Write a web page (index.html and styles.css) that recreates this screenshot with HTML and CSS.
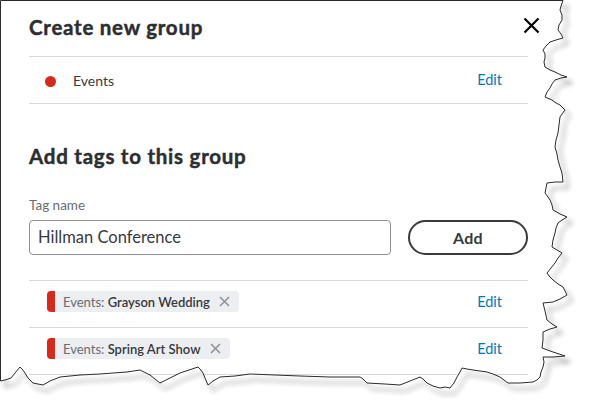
FILE: index.html
```html
<!DOCTYPE html>
<html lang="en">
<head>
<meta charset="utf-8">
<title>Create new group</title>
<link rel="stylesheet" href="styles.css">
</head>
<body>
<div class="modal">
  <div class="header">
    <h1 class="title">Create new group</h1>
    <button class="close" aria-label="Close">
      <svg width="17" height="17" viewBox="0 0 17 17"><path d="M1.5 1.5L15.5 15.5M15.5 1.5L1.5 15.5" stroke="#000" stroke-width="2.2" fill="none"/></svg>
    </button>
  </div>
  <div class="row group-row">
    <div class="group-name"><span class="dot"></span><span>Events</span></div>
    <a class="edit">Edit</a>
  </div>

  <h2 class="title section-title">Add tags to this group</h2>
  <div class="field">
    <label class="label">Tag name</label>
    <div class="input-row">
      <div class="input">Hillman Conference</div>
      <button class="add">Add</button>
    </div>
  </div>

  <div class="row tag-row">
    <span class="pill"><span class="pre">Events:</span>&nbsp;<span class="name">Grayson Wedding</span>
      <svg class="x" width="11" height="11" viewBox="0 0 11 11"><path d="M1 1L10 10M10 1L1 10" stroke="#8d9096" stroke-width="1.5"/></svg></span>
    <a class="edit">Edit</a>
  </div>
  <div class="row tag-row">
    <span class="pill"><span class="pre">Events:</span>&nbsp;<span class="name">Spring Art Show</span>
      <svg class="x" width="11" height="11" viewBox="0 0 11 11"><path d="M1 1L10 10M10 1L1 10" stroke="#8d9096" stroke-width="1.5"/></svg></span>
    <a class="edit">Edit</a>
  </div>
</div>

<svg class="torn" width="589" height="412" viewBox="0 0 589 412">
  <defs>
    <filter id="blur" x="-10%" y="-10%" width="130%" height="130%"><feGaussianBlur stdDeviation="2.6"/></filter>
    <clipPath id="outside">
      <path clip-rule="evenodd" d="M0 0H589V412H0Z M0.5 0.5 L563 0.5 L561 6 L560 10 L562 15 L562 20 L559 25 L558 30 L561 34 L563 38 L556 40 L550 42 L546 46 L543 50 L545 54 L545 58 L544 62 L545 67 L550 70 L555 72 L561 75 L567 77 L561 78 L555 80 L552 84 L550 88 L547 92 L545 97 L552 100 L556 103 L560 105 L563 108 L565 110 L562 114 L560 117 L559 125 L558 133 L556 140 L555 147 L557 154 L558 160 L560 167 L562 173 L563 182 L555 182 L547 183 L546 188 L545 193 L548 197 L550 200 L552 205 L553 210 L560 214 L567 217 L562 220 L558 223 L556 228 L555 233 L553 240 L552 247 L557 250 L562 253 L558 258 L555 263 L551 268 L547 273 L550 277 L553 280 L558 284 L563 287 L565 291 L567 295 L560 299 L553 302 L543 303 L545 311 L547 320 L552 324 L557 327 L550 329 L543 332 L543 340 L542 348 L553 352 L565 356 L553 357 L543 357 L544 362 L543 367 L541 372 L540 377 L537 380 L533 382 L520 383 L508 383 L504 380 L500 377 L493 374 L487 372 L480 371 L473 370 L467 369 L462 368 L460 372 L457 377 L454 383 L450 388 L445 387 L440 388 L433 386 L427 383 L423 379 L420 377 L410 381 L400 385 L385 384 L367 383 L363 379 L360 377 L330 377 L300 376 L275 375 L250 374 L235 376 L220 377 L213 381 L208 385 L205 378 L203 373 L200 369 L198 367 L189 370 L180 373 L170 378 L160 383 L150 375 L140 370 L127 372 L113 373 L100 374 L80 375 L60 377 L50 381 L43 385 L33 383 L28 378 L25 373 L22 369 L20 367 L15 373 L11 378 L5 380 L0.5 381 Z"/>
    </clipPath>
  </defs>
  <g clip-path="url(#outside)">
    <rect width="589" height="412" fill="#fff"/>
    <use href="#edge" transform="translate(5 6)" fill="#000" opacity="0.75" filter="url(#blur)"/>
  </g>
  <path id="edge" fill="none" stroke="#2b2b2b" stroke-width="1" d="M0.5 0.5 L563 0.5 L561 6 L560 10 L562 15 L562 20 L559 25 L558 30 L561 34 L563 38 L556 40 L550 42 L546 46 L543 50 L545 54 L545 58 L544 62 L545 67 L550 70 L555 72 L561 75 L567 77 L561 78 L555 80 L552 84 L550 88 L547 92 L545 97 L552 100 L556 103 L560 105 L563 108 L565 110 L562 114 L560 117 L559 125 L558 133 L556 140 L555 147 L557 154 L558 160 L560 167 L562 173 L563 182 L555 182 L547 183 L546 188 L545 193 L548 197 L550 200 L552 205 L553 210 L560 214 L567 217 L562 220 L558 223 L556 228 L555 233 L553 240 L552 247 L557 250 L562 253 L558 258 L555 263 L551 268 L547 273 L550 277 L553 280 L558 284 L563 287 L565 291 L567 295 L560 299 L553 302 L543 303 L545 311 L547 320 L552 324 L557 327 L550 329 L543 332 L543 340 L542 348 L553 352 L565 356 L553 357 L543 357 L544 362 L543 367 L541 372 L540 377 L537 380 L533 382 L520 383 L508 383 L504 380 L500 377 L493 374 L487 372 L480 371 L473 370 L467 369 L462 368 L460 372 L457 377 L454 383 L450 388 L445 387 L440 388 L433 386 L427 383 L423 379 L420 377 L410 381 L400 385 L385 384 L367 383 L363 379 L360 377 L330 377 L300 376 L275 375 L250 374 L235 376 L220 377 L213 381 L208 385 L205 378 L203 373 L200 369 L198 367 L189 370 L180 373 L170 378 L160 383 L150 375 L140 370 L127 372 L113 373 L100 374 L80 375 L60 377 L50 381 L43 385 L33 383 L28 378 L25 373 L22 369 L20 367 L15 373 L11 378 L5 380 L0.5 381 Z"/>
</svg>
</body>
</html>
```

FILE: styles.css
```css
* { box-sizing: border-box; }

html, body {
  margin: 0;
  padding: 0;
}

body {
  width: 589px;
  height: 412px;
  overflow: hidden;
  position: relative;
  background: #fff;
  font-family: Lato, "Open Sans", sans-serif;
  color: #393a3d;
}

.modal {
  padding: 0 61px 0 29px;
}

.header {
  display: flex;
  justify-content: space-between;
  align-items: flex-start;
  height: 57px;
  padding-top: 15px;
  border-bottom: 1px solid #d4d7dc;
}

.title {
  margin: 0;
  font-size: 20.5px;
  line-height: 24px;
  font-weight: 700;
  color: #2d2e31;
  letter-spacing: 0.75px;
  -webkit-text-stroke: 0.45px #2d2e31;
}

.close {
  border: 0;
  background: none;
  padding: 0;
  margin: 2px -12px 0 0;
  width: 17px;
  height: 17px;
  display: block;
}
.close svg { display: block; }

.row {
  display: flex;
  align-items: center;
  justify-content: space-between;
  height: 47px;
  border-bottom: 1px solid #d4d7dc;
  padding-right: 26px;
}

.group-row {
  padding-left: 16px;
}

.group-name {
  display: flex;
  align-items: center;
  gap: 17px;
  font-size: 14px;
  line-height: 18px;
  padding-top: 2px;
}

.dot {
  width: 11px;
  height: 11px;
  border-radius: 50%;
  background: #d52b1e;
  display: block;
}

.edit {
  color: #0077c5;
  font-size: 14.5px;
  line-height: 18px;
  cursor: pointer;
}

.section-title {
  margin-top: 40px;
}

.field {
  padding-top: 29px;
  padding-bottom: 25px;
  border-bottom: 1px solid #d4d7dc;
}

.label {
  display: block;
  font-size: 13.5px;
  line-height: 16px;
  color: #6b6c72;
  margin-bottom: 7px;
}

.input-row {
  display: flex;
  gap: 17px;
}

.input {
  width: 362px;
  height: 35px;
  border: 1px solid #8d9096;
  border-radius: 4px;
  padding: 0 8px;
  font-size: 16.5px;
  line-height: 33px;
  color: #393a3d;
}

.add {
  width: 120px;
  height: 35px;
  border: 2px solid #393a3d;
  border-radius: 18px;
  background: #fff;
  font-family: Lato, "Open Sans", sans-serif;
  font-size: 16px;
  font-weight: 700;
  letter-spacing: 0.3px;
  color: #393a3d;
  padding: 0;
}

.tag-row {
  padding-left: 18px;
  padding-bottom: 5px;
}

.pill {
  display: inline-flex;
  align-items: center;
  height: 21px;
  border-left: 8px solid #d52b1e;
  border-radius: 4px;
  background: #eceef1;
  padding: 0 9px 0 8px;
  font-size: 13px;
  line-height: 16px;
}

.pre { color: #6b6c72; }
.name { color: #393a3d; font-weight: 600; }

.x {
  margin-left: 9px;
  display: block;
}

.torn {
  position: absolute;
  left: 0;
  top: 0;
  pointer-events: none;
}
```
